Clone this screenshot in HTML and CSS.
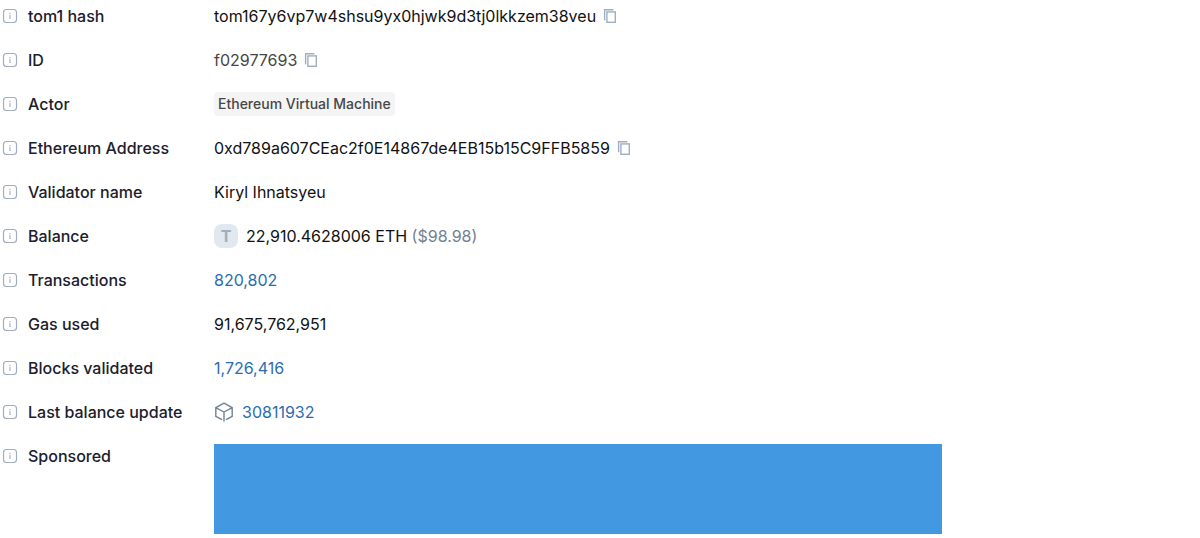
FILE: index.html
```html
<!DOCTYPE html>
<html lang="en">
<head>
<meta charset="utf-8">
<meta name="viewport" content="width=device-width, initial-scale=1">
<title>Address details</title>
<link rel="stylesheet" href="styles.css">
</head>
<body>
<svg class="sprite" aria-hidden="true">
  <symbol id="info" viewBox="0 0 20 20">
    <rect x="3.5" y="3.5" width="13" height="13" rx="3" fill="none" stroke="currentColor" stroke-width="1.2"/>
    <path d="M9.2 7h1.6v1.2H9.2zM9.2 9h1.6v4H9.2z" fill="currentColor" opacity=".7"/>
  </symbol>
  <symbol id="copy" viewBox="0 0 20 20">
    <path d="M4.6 14.2V3.7h8.8" fill="none" stroke="currentColor" stroke-width="1.4"/>
    <rect x="6.9" y="5.9" width="8.4" height="10.4" fill="none" stroke="currentColor" stroke-width="1.4"/>
  </symbol>
  <symbol id="block" viewBox="0 0 20 20">
    <path d="M8 17.6 1.8 14.4V5.6L10 1.2l8.2 4.4v8.8L12 17.6M1.8 5.6 10 10l8.2-4.4M10 10v9.6" fill="none" stroke="currentColor" stroke-width="1.4" stroke-linejoin="round"/>
  </symbol>
</svg>
<dl class="details">
  <dt class="label"><button class="icon-button" aria-label="About tom1 hash"><svg class="icon"><use href="#info"/></svg></button>tom1 hash</dt>
  <dd class="value"><span>tom167y6vp7w4shsu9yx0hjwk9d3tj0lkkzem38veu</span><button class="icon-button copy" aria-label="Copy hash"><svg class="icon"><use href="#copy"/></svg></button></dd>

  <dt class="label"><button class="icon-button" aria-label="About ID"><svg class="icon"><use href="#info"/></svg></button>ID</dt>
  <dd class="value"><span class="muted">f02977693</span><button class="icon-button copy" aria-label="Copy ID"><svg class="icon"><use href="#copy"/></svg></button></dd>

  <dt class="label"><button class="icon-button" aria-label="About actor"><svg class="icon"><use href="#info"/></svg></button>Actor</dt>
  <dd class="value"><span class="tag">Ethereum Virtual Machine</span></dd>

  <dt class="label"><button class="icon-button" aria-label="About Ethereum address"><svg class="icon"><use href="#info"/></svg></button>Ethereum Address</dt>
  <dd class="value"><span>0xd789a607CEac2f0E14867de4EB15b15C9FFB5859</span><button class="icon-button copy" aria-label="Copy address"><svg class="icon"><use href="#copy"/></svg></button></dd>

  <dt class="label"><button class="icon-button" aria-label="About validator name"><svg class="icon"><use href="#info"/></svg></button>Validator name</dt>
  <dd class="value">Kiryl Ihnatsyeu</dd>

  <dt class="label"><button class="icon-button" aria-label="About balance"><svg class="icon"><use href="#info"/></svg></button>Balance</dt>
  <dd class="value"><span class="token">T</span><span>22,910.4628006 ETH <span class="fiat">($98.98)</span></span></dd>

  <dt class="label"><button class="icon-button" aria-label="About transactions"><svg class="icon"><use href="#info"/></svg></button>Transactions</dt>
  <dd class="value"><a class="link" href="#txs">820,802</a></dd>

  <dt class="label"><button class="icon-button" aria-label="About gas used"><svg class="icon"><use href="#info"/></svg></button>Gas used</dt>
  <dd class="value">91,675,762,951</dd>

  <dt class="label"><button class="icon-button" aria-label="About blocks validated"><svg class="icon"><use href="#info"/></svg></button>Blocks validated</dt>
  <dd class="value"><a class="link" href="#blocks">1,726,416</a></dd>

  <dt class="label"><button class="icon-button" aria-label="About last balance update"><svg class="icon"><use href="#info"/></svg></button>Last balance update</dt>
  <dd class="value"><svg class="icon block" aria-hidden="true"><use href="#block"/></svg><a class="link" href="#block-30811932">30811932</a></dd>

  <dt class="label"><button class="icon-button" aria-label="About sponsored"><svg class="icon"><use href="#info"/></svg></button>Sponsored</dt>
  <dd class="value"><div class="banner"></div></dd>
</dl>
</body>
</html>
```

FILE: styles.css
```css
* {
  box-sizing: border-box;
}

body {
  margin: 0;
  background: #fff;
  color: #101112;
  font: 400 16px/24px Inter, "Liberation Sans", sans-serif;
}

.sprite {
  position: absolute;
  width: 0;
  height: 0;
}

.details {
  display: grid;
  grid-template-columns: 190px minmax(0, 1fr);
  gap: 20px 24px;
  margin: 0;
  padding: 4px 0;
}

.label {
  display: flex;
  align-items: center;
  align-self: start;
  gap: 8px;
  color: #1a202c;
  font-weight: 500;
}

.value {
  display: flex;
  align-items: center;
  min-height: 24px;
  margin: 0;
}

.icon-button {
  display: flex;
  padding: 0;
  border: 0;
  background: none;
  color: #a0aec0;
  cursor: pointer;
}

.icon {
  display: block;
  flex: none;
  width: 20px;
  height: 20px;
}

.copy {
  margin-left: 4px;
}

.muted {
  color: #464646;
}

.tag {
  padding: 0 4px;
  border-radius: 4px;
  background: #f4f4f4;
  color: #464747;
  font-size: 14px;
  font-weight: 500;
}

.token {
  width: 24px;
  margin-right: 8px;
  border-radius: 8px;
  background: #e2e8f0;
  color: #a0aec0;
  font-weight: 700;
  text-align: center;
}

.fiat {
  color: #718096;
}

.link {
  color: #2b6cb0;
  text-decoration: none;
}

.block {
  margin-right: 8px;
  color: #718096;
}

.banner {
  width: 100%;
  max-width: 728px;
  height: 90px;
  background: #4299e1;
}
```
